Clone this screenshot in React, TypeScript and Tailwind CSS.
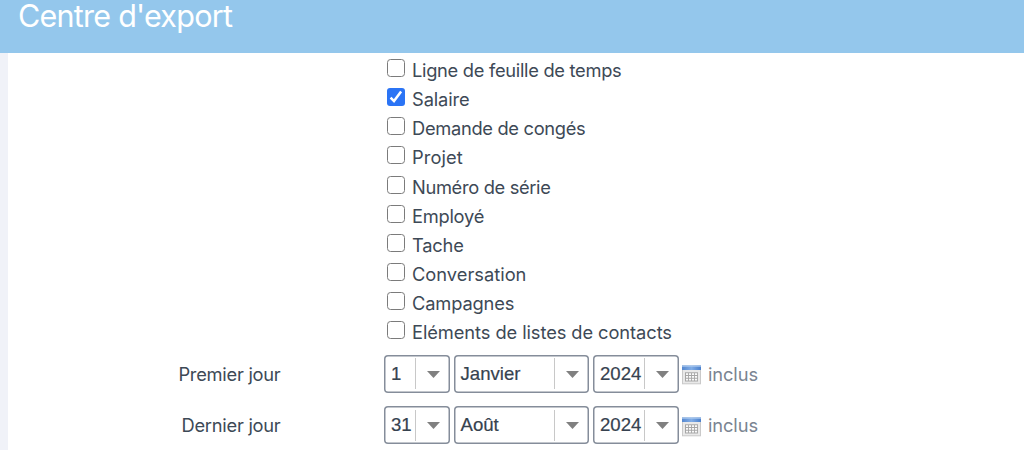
import { useState } from "react";

const options = [
  { label: "Ligne de feuille de temps", tracking: "tracking-[-0.29px]" },
  { label: "Salaire", tracking: "tracking-[-0.1px]" },
  { label: "Demande de congés", tracking: "tracking-[-0.31px]" },
  { label: "Projet", tracking: "tracking-[0.08px]" },
  { label: "Numéro de série", tracking: "tracking-[-0.33px]" },
  { label: "Employé", tracking: "tracking-[-0.25px]" },
  { label: "Tache", tracking: "tracking-[-0.2px]" },
  { label: "Conversation", tracking: "tracking-[0px]" },
  { label: "Campagnes", tracking: "tracking-[-0.15px]" },
  { label: "Eléments de listes de contacts", tracking: "tracking-[-0.08px]" },
];

function Checkbox({ checked, onChange }: { checked: boolean; onChange: () => void }) {
  return (
    <button
      type="button"
      role="checkbox"
      aria-checked={checked}
      onClick={onChange}
      className={
        checked
          ? "flex size-[18px] shrink-0 items-center justify-center rounded-[3px] bg-[#2b74f5]"
          : "size-[18px] shrink-0 rounded-[3.5px] border-[1.4px] border-[#7b7b7b] bg-white"
      }
    >
      {checked && (
        <svg viewBox="0 0 18 18" className="size-[18px]" fill="none" stroke="white" strokeWidth="2.5">
          <path d="M3.6 9.6 7 13.1 14.1 3.6" />
        </svg>
      )}
    </button>
  );
}

function Select({ value, width }: { value: string; width: string }) {
  return (
    <button
      type="button"
      className={`flex h-[38px] shrink-0 items-center rounded-[4px] bg-white inset-ring-[1.5px] inset-ring-[#858d9a] ${width}`}
    >
      <span className="flex-1 pl-[7px] text-left font-['Liberation_Sans',sans-serif] text-[18.6px] leading-none text-[#36424f] [-webkit-text-stroke:0.2px_#36424f]">
        {value}
      </span>
      <span className="mr-px flex h-[31px] w-[34px] shrink-0 items-center justify-center border-l border-[#c8c8c8]">
        <svg viewBox="0 0 13 7" className="mt-px ml-[2px] h-[7px] w-[13px]" fill="#808080">
          <path d="M0 0h13L6.5 7z" />
        </svg>
      </span>
    </button>
  );
}

function CalendarIcon() {
  return (
    <svg viewBox="0 0 19 20" className="mt-[3px] -ml-px h-5 w-[19px] shrink-0">
      <defs>
        <linearGradient id="calendar-top" x1="0" y1="0" x2="1" y2="0">
          <stop offset="0" stopColor="#5688cf" />
          <stop offset="0.5" stopColor="#81ade6" />
          <stop offset="1" stopColor="#4b80cc" />
        </linearGradient>
      </defs>
      <path d="M0 .5h19v18.8H0z" fill="#c9c9c9" />
      <path d="M1 5h17v13.3H1z" fill="#e9e9e9" />
      <path d="M0 .5h19V5H0z" fill="url(#calendar-top)" />
      <path d="M0 .5h19v1.2H0z" fill="#a9c9f0" />
      <path d="M3 7.3h13v9.2H3z" fill="#a6a6a6" />
      <path
        d="M4 8.3h2.1v1.8H4zM7 8.3h2.1v1.8H7zM10 8.3h2.1v1.8H10zM13 8.3h2.1v1.8H13zM4 11h2.1v1.8H4zM7 11h2.1v1.8H7zM10 11h2.1v1.8H10zM13 11h2.1v1.8H13zM4 13.7h2.1v1.8H4zM7 13.7h2.1v1.8H7zM10 13.7h2.1v1.8H10zM13 13.7h2.1v1.8H13z"
        fill="#fafafa"
      />
    </svg>
  );
}

function DateRow({ label, day, month, year }: { label: string; day: string; month: string; year: string }) {
  return (
    <div className="flex h-[38px] items-center">
      <span className="w-[273px] shrink-0 text-right tracking-[-0.25px]">{label}</span>
      <div className="ml-[103.5px] flex items-center gap-[4px]">
        <Select value={day} width="w-[65.5px]" />
        <Select value={month} width="w-[135.5px]" />
        <Select value={year} width="w-[86px]" />
        <CalendarIcon />
        <span className="ml-[3px] tracking-[-0.1px] text-[#7a8491]">inclus</span>
      </div>
    </div>
  );
}

export default function App() {
  const [selected, setSelected] = useState<string[]>(["Salaire"]);
  const toggle = (label: string) =>
    setSelected((items) => (items.includes(label) ? items.filter((i) => i !== label) : [...items, label]));

  return (
    <div className="flex h-[450px] w-[1024px] flex-col overflow-hidden bg-[#f0f2f8] font-[Inter,sans-serif] text-[18.3px] leading-[24px] text-[#3d4956]">
      <header className="h-[53px] shrink-0 bg-[#94c7ec] pl-[18px]">
        <h1 className="text-[30.5px] leading-[32px] tracking-[-0.75px] whitespace-nowrap text-white">
          Centre d'export
        </h1>
      </header>
      <main className="ml-[7.5px] flex-1 bg-white">
        <div className="pt-[2.6px] pl-[379.5px]">
          {options.map(({ label, tracking }) => (
            <div key={label} className="flex h-[29.1px] items-center gap-[7px]">
              <div className="-mt-[4px] flex">
                <Checkbox checked={selected.includes(label)} onChange={() => toggle(label)} />
              </div>
              <span className={`whitespace-nowrap ${tracking}`}>{label}</span>
            </div>
          ))}
        </div>
        <div className="flex flex-col gap-[13.5px] pt-[8.4px]">
          <DateRow label="Premier jour" day="1" month="Janvier" year="2024" />
          <DateRow label="Dernier jour" day="31" month="Août" year="2024" />
        </div>
      </main>
    </div>
  );
}
